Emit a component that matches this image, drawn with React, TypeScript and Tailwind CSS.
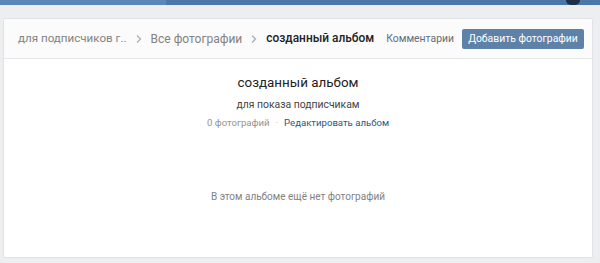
import React from 'react';

const Chevron = () => (
  <svg width="8" height="10" viewBox="0 0 8 10" className="mx-[8px] shrink-0">
    <path d="M2 1.5 L5.5 5 L2 8.5" fill="none" stroke="#a8b0ba" strokeWidth="1.3" />
  </svg>
);

const App: React.FC = () => {
  return (
    <div className="w-[600px] h-[263px] overflow-hidden bg-[#edeef0] flex flex-col whitespace-nowrap" style={{ fontFamily: '"Roboto", "Open Sans", sans-serif' }}>
      <div className="h-[5px] bg-[#4a76a8] flex shrink-0">
        <div className="w-[166px] bg-[#5b86b8]" />
        <div className="flex-1" />
        <div className="w-[14px] mr-[20px] bg-[#1f2f44] rounded-b-full" />
      </div>
      <div className="flex-1 mt-[13px] ml-[3px] mr-[7px] mb-[5px] bg-white border border-[#dfe2e8] rounded-[2px] flex flex-col">
        <div className="h-[40px] flex items-center pl-[14px] pr-[8px] border-b border-[#e7e8ec] bg-[#fbfbfc] shrink-0">
          <span className="text-[11.6px] text-[#828282]">для подписчиков г..</span>
          <Chevron />
          <span className="text-[12px] text-[#828282]">Все фотографии</span>
          <Chevron />
          <span className="text-[11.9px] text-[#222] font-medium">созданный альбом</span>
          <div className="flex-1" />
          <span className="text-[10.4px] text-[#626d7a] mr-[8px]">Комментарии</span>
          <button className="h-[20px] w-[122px] bg-[#5e81a8] text-white text-[10.4px] rounded-[2px]">Добавить фотографии</button>
        </div>
        <div className="flex flex-col items-center pt-[15px]">
          <div className="text-[13.4px] text-[#222] leading-[18px]">созданный альбом</div>
          <div className="text-[10.4px] text-[#444] mt-[6px] leading-[13px]">для показа подписчикам</div>
          <div className="text-[9.6px] mt-[5px] leading-[13px] flex items-center">
            <span className="text-[#939393]">0 фотографий</span>
            <span className="text-[#bbb] mx-[6px]">·</span>
            <span className="text-[#2a5885]">Редактировать альбом</span>
          </div>
          <div className="text-[10px] text-[#828282] mt-[60px]">В этом альбоме ещё нет фотографий</div>
        </div>
      </div>
    </div>
  );
};

export default App;
